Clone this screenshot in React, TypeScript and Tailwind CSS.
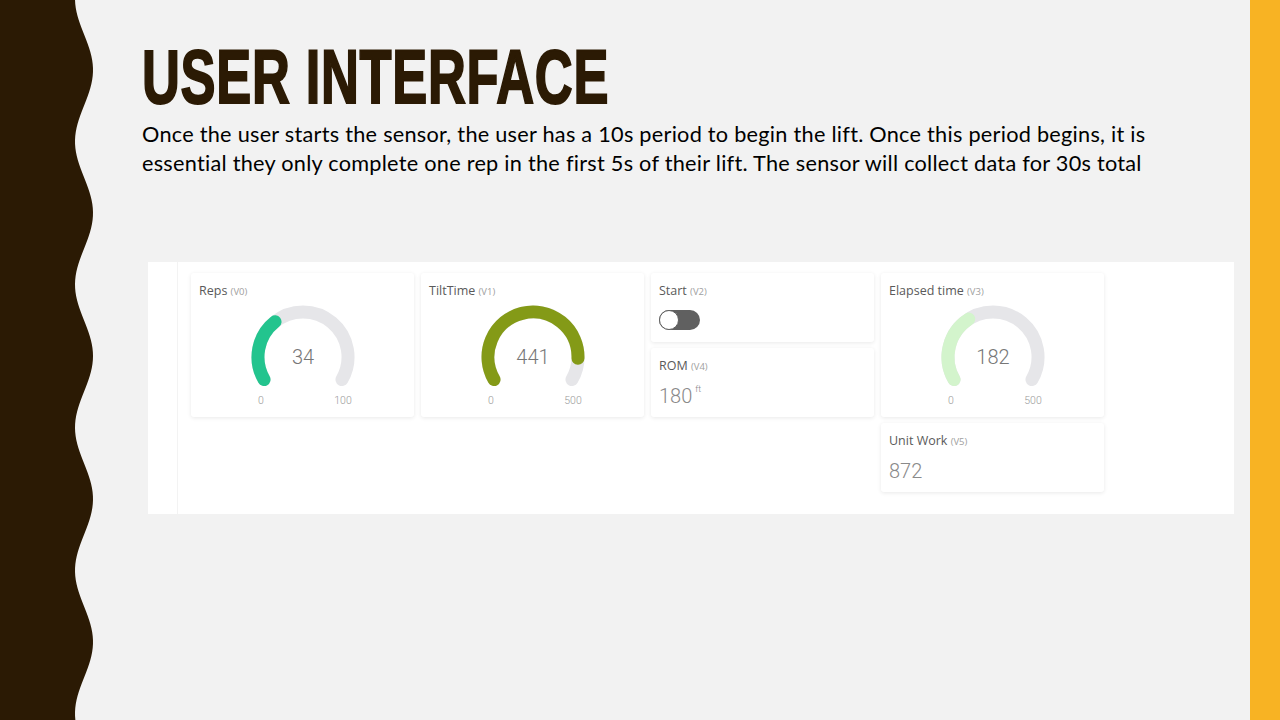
import React from "react"

const wavePoints = (() => {
  const pts: string[] = ["0,0"]
  for (let y = 0; y <= 720; y += 4) {
    const x = 84 + 9 * Math.cos((2 * Math.PI * (y - 70)) / 143)
    pts.push(`${x.toFixed(2)},${y}`)
  }
  pts.push("0,720")
  return pts.join(" ")
})()

function polar(cx: number, cy: number, r: number, deg: number) {
  const a = (deg * Math.PI) / 180
  return { x: cx + r * Math.cos(a), y: cy - r * Math.sin(a) }
}

function arc(cx: number, cy: number, r: number, from: number, sweep: number) {
  const s = polar(cx, cy, r, from)
  const e = polar(cx, cy, r, from - sweep)
  const large = sweep > 180 ? 1 : 0
  return `M ${s.x.toFixed(2)} ${s.y.toFixed(2)} A ${r} ${r} 0 ${large} 1 ${e.x.toFixed(2)} ${e.y.toFixed(2)}`
}

function Gauge({ value, max, color }: { value: number; max: number; color: string }) {
  const cx = 65
  const cy = 55
  const r = 45
  const frac = Math.min(value / max, 1)
  return (
    <svg width="130" height="112" viewBox="0 0 130 112">
      <path d={arc(cx, cy, r, 210, 240)} fill="none" stroke="#e6e6e9" strokeWidth="13" strokeLinecap="round" />
      <path d={arc(cx, cy, r, 210, 240 * frac)} fill="none" stroke={color} strokeWidth="13" strokeLinecap="round" />
      <text x={cx} y={cy + 7} textAnchor="middle" fontFamily="Roboto, sans-serif" fontWeight="300" fontSize="20" fill="#777">
        {value}
      </text>
      <text x={cx - 42} y={cy + 47} textAnchor="middle" fontFamily="Roboto, sans-serif" fontWeight="300" fontSize="10.5" fill="#999">
        0
      </text>
      <text x={cx + 40} y={cy + 47} textAnchor="middle" fontFamily="Roboto, sans-serif" fontWeight="300" fontSize="10.5" fill="#999">
        {max}
      </text>
    </svg>
  )
}

function CardTitle({ name, pin }: { name: string; pin: string }) {
  return (
    <div className="px-[8px] pt-[10px] leading-[16px] text-[12.5px] text-[#5a5a5a] font-['Open_Sans',sans-serif]">
      {name} <span className="text-[9.5px] text-[#a0a0a0]">({pin})</span>
    </div>
  )
}

const card = "bg-white rounded-[3px] shadow-[0_1px_4px_rgba(0,0,0,0.09)]"

function GaugeCard({ name, pin, value, max, color }: { name: string; pin: string; value: number; max: number; color: string }) {
  return (
    <div className={`${card} row-span-2 flex flex-col`}>
      <CardTitle name={name} pin={pin} />
      <div className="flex justify-center mt-[2px]">
        <Gauge value={value} max={max} color={color} />
      </div>
    </div>
  )
}

function ValueCard({ name, pin, value, unit, className = "" }: { name: string; pin: string; value: string; unit?: string; className?: string }) {
  return (
    <div className={`${card} ${className}`}>
      <CardTitle name={name} pin={pin} />
      <div className="px-[8px] pt-[9px] flex items-start font-['Roboto',sans-serif] font-light text-[20px] leading-[24px] text-[#8a8a8a]">
        {value}
        {unit && <span className="text-[9px] leading-[12px] ml-[3px] mt-[-1px]">{unit}</span>}
      </div>
    </div>
  )
}

export default function App() {
  return (
    <div className="w-[1280px] h-[720px] flex bg-[#f2f2f2] overflow-hidden">
      <svg width="94" height="720" viewBox="0 0 94 720" className="shrink-0">
        <polygon points={wavePoints} fill="#2b1a04" />
      </svg>

      <div className="flex-1 flex flex-col pl-[48px] pr-[16px]">
        <h1 className="mt-[41px] h-[72px] text-[#2b1a04] font-['Liberation_Sans_Narrow','Liberation_Sans',sans-serif] font-bold text-[76px] leading-[72px] tracking-[1px] origin-left scale-x-[0.69] whitespace-nowrap [-webkit-text-stroke:2px_#2b1a04]">
          USER INTERFACE
        </h1>
        <p className="mt-[7px] text-black font-['Lato',sans-serif] text-[21.7px] leading-[29px] tracking-[0.26px] whitespace-nowrap">
          Once the user starts the sensor, the user has a 10s period to begin the lift. Once this period begins, it is
          <br />
          essential they only complete one rep in the first 5s of their lift. The sensor will collect data for 30s total
        </p>

        <div className="mt-[84px] ml-[6px] h-[252px] bg-white flex">
          <div className="w-[30px] border-r border-[#f3f3f3]" />
          <div className="pl-[13px] pt-[11px] grid grid-cols-[repeat(4,223px)] grid-rows-[repeat(3,69px)] gap-x-[7px] gap-y-[6px]">
            <GaugeCard name="Reps" pin="V0" value={34} max={100} color="#23c48e" />
            <GaugeCard name="TiltTime" pin="V1" value={441} max={500} color="#849a17" />
            <div className={`${card} col-start-3 row-start-1`}>
              <CardTitle name="Start" pin="V2" />
              <div className="px-[8px] pt-[10px]">
                <div className="w-[41px] h-[20px] rounded-full bg-[#606060] flex items-center">
                  <div className="w-[20px] h-[20px] rounded-full bg-white border-[1.5px] border-[#606060]" />
                </div>
              </div>
            </div>
            <div className={`${card} col-start-4 row-start-1 row-span-2 flex flex-col`}>
              <CardTitle name="Elapsed time" pin="V3" />
              <div className="flex justify-center mt-[2px]">
                <Gauge value={182} max={500} color="#d3f4cc" />
              </div>
            </div>
            <ValueCard className="col-start-3 row-start-2" name="ROM" pin="V4" value="180" unit="ft" />
            <ValueCard className="col-start-4 row-start-3" name="Unit Work" pin="V5" value="872" />
          </div>
        </div>
      </div>

      <div className="w-[30px] shrink-0 bg-[#f8b323]" />
    </div>
  )
}
